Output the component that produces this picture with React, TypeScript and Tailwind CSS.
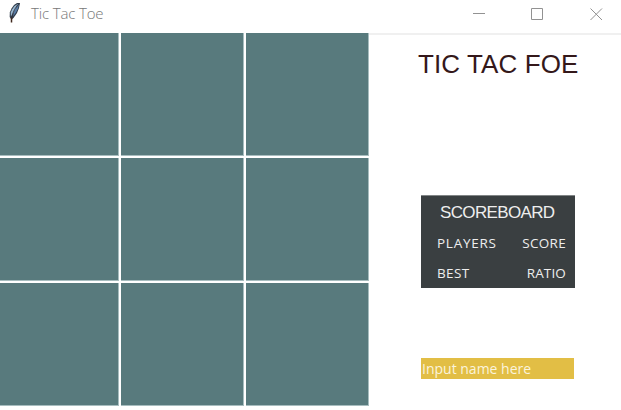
import React from "react";

function Feather() {
  return (
    <svg className="block h-[24px] w-[14px]" viewBox="0 0 14 24">
      <path d="M12 3H9L6 5L3.500 8.500L1.800 12.500L1.700 17L3.300 19.500L5.500 18L9 13L11 8Z" fill="#303b49" />
      <path d="M10 3.800L6.500 6L4 9.500L2.700 12.500L2.900 16.500L5 13.500L8 8Z" fill="#9ab9d2" />
      <path d="M11 4.500L10 8.500L8 12.500L5 16.500L6.500 10Z" fill="#587ca5" />
      <path d="M9.500 5L6.500 9.500L4.500 14L3.500 20" fill="none" stroke="#34343e" strokeWidth="0.8" />
      <path d="M3.500 17.500V22.500" stroke="#41291f" strokeWidth="1.500" />
    </svg>
  );
}

function TitleBar() {
  return (
    <header className="flex h-[33px] items-start text-[#929292]">
      <div className="flex items-start pl-2">
        <Feather />
        <h1 className="ml-[9px] mt-[3px] whitespace-nowrap font-['Open_Sans',sans-serif] text-[15px] font-light leading-5 tracking-[-0.15px] text-[#777777]">Tic Tac Toe</h1>
      </div>
      <svg className="ml-auto mr-[18px] mt-[7px] h-[14px] w-[130px] shrink-0" viewBox="0 0 130 14" fill="none" stroke="#929292">
        <path d="M0 6.500H12M58.500 1.500H69.500V12.500H58.500ZM117.500 1.500L129 13M129 1.500L117.500 13" />
      </svg>
    </header>
  );
}

function Board() {
  return (
    <div className="grid h-[373px] w-[369px] shrink-0 grid-cols-[119px_123px_123px] grid-rows-[123px_123px_123px] gap-[2px]">
      {Array.from({ length: 9 }, (_, i) => (
        <button key={i} aria-label={`Cell ${i + 1}`} className="border-b border-r border-[#a7bdbf] bg-[#587a7d]" />
      ))}
    </div>
  );
}

function Sidebar() {
  return (
    <aside className="flex flex-1 flex-col border-t-2 border-[#f0f0f0] font-['Liberation_Sans',sans-serif]">
      <h2 className="ml-[49px] mt-[13px] whitespace-nowrap text-[26px] leading-8 tracking-[0.1px] text-[#34181a]">TIC TAC FOE</h2>
      <section className="ml-[52px] mt-[115px] h-[93px] w-[154px] border-t border-[#818586] bg-[#3a3f41] text-[#eeeeee]">
        <h3 className="pl-[19px] pt-[7px] text-[17px] leading-5 tracking-[-0.65px]">SCOREBOARD</h3>
        <div className="mt-[10px] flex justify-between pl-4 pr-[9px] font-['Open_Sans',sans-serif] text-[13.500px] leading-5 [font-kerning:none]">
          <span className="tracking-[0.75px]">PLAYERS</span><span className="tracking-[0.3px]">SCORE</span>
        </div>
        <div className="mt-[10px] flex justify-between pl-4 pr-[9px] font-['Open_Sans',sans-serif] text-[13.500px] leading-5 [font-kerning:none]">
          <span className="tracking-[0.35px]">BEST</span><span className="tracking-[0.15px]">RATIO</span>
        </div>
      </section>
      <input aria-label="Player name" defaultValue="Input name here" className="ml-[52px] mt-[70px] h-[21px] w-[153px] bg-[#e2be45] pl-px font-['Open_Sans',sans-serif] text-[14px] text-[#fbf4dc] outline-none" />
    </aside>
  );
}

export default function App() {
  return (
    <main className="h-[410px] w-[621px] overflow-hidden bg-white">
      <TitleBar />
      <div className="flex h-[377px]">
        <Board />
        <Sidebar />
      </div>
    </main>
  );
}
